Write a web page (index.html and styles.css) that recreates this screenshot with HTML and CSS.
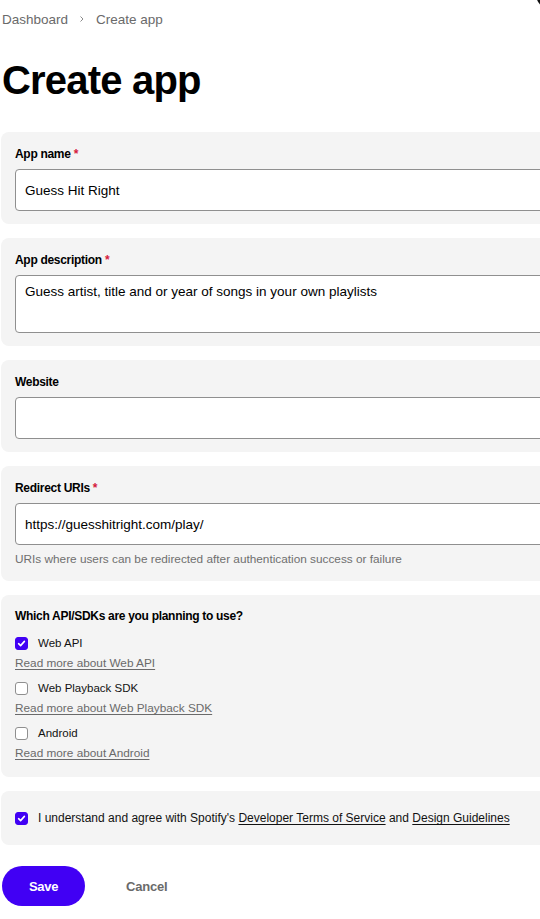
FILE: index.html
```html
<!DOCTYPE html>
<html lang="en">
<head>
<meta charset="utf-8">
<title>Create app</title>
<link rel="stylesheet" href="styles.css">
</head>
<body>
<div class="avatar"></div>
<main class="page">
  <nav class="breadcrumb">
    <span class="crumb">Dashboard</span>
    <svg class="chev" width="8" height="8" viewBox="0 0 8 8"><path d="M2.5 1.5 L5 4 L2.5 6.5" fill="none" stroke="#8a8a8a" stroke-width="1"/></svg>
    <span class="crumb">Create app</span>
  </nav>
  <h1 class="title">Create app</h1>

  <form class="form">
    <section class="card">
      <label class="label">App name <span class="req">*</span></label>
      <input class="field" type="text" value="Guess Hit Right">
    </section>

    <section class="card">
      <label class="label">App description <span class="req">*</span></label>
      <textarea class="field area">Guess artist, title and or year of songs in your own playlists</textarea>
    </section>

    <section class="card">
      <label class="label">Website</label>
      <input class="field" type="text" value="">
    </section>

    <section class="card">
      <label class="label">Redirect URIs <span class="req">*</span></label>
      <input class="field" type="text" value="https://guesshitright.com/play/">
      <p class="help">URIs where users can be redirected after authentication success or failure</p>
    </section>

    <section class="card card-apis">
      <div class="label label-apis">Which API/SDKs are you planning to use?</div>
      <div class="option">
        <div class="check-row">
          <span class="box checked"><svg width="9" height="9" viewBox="0 0 9 9"><path d="M1.6 4.7 L3.6 6.6 L7.4 2.4" fill="none" stroke="#fff" stroke-width="1.6" stroke-linecap="round" stroke-linejoin="round"/></svg></span>
          <span class="check-text">Web API</span>
        </div>
        <a class="more">Read more about Web API</a>
      </div>
      <div class="option">
        <div class="check-row">
          <span class="box"></span>
          <span class="check-text">Web Playback SDK</span>
        </div>
        <a class="more">Read more about Web Playback SDK</a>
      </div>
      <div class="option">
        <div class="check-row">
          <span class="box"></span>
          <span class="check-text">Android</span>
        </div>
        <a class="more">Read more about Android</a>
      </div>
    </section>

    <section class="card card-terms">
      <div class="check-row">
        <span class="box checked"><svg width="9" height="9" viewBox="0 0 9 9"><path d="M1.6 4.7 L3.6 6.6 L7.4 2.4" fill="none" stroke="#fff" stroke-width="1.6" stroke-linecap="round" stroke-linejoin="round"/></svg></span>
        <span class="check-text terms-text">I understand and agree with Spotify's <a class="terms-link">Developer Terms of Service</a> and <a class="terms-link">Design Guidelines</a></span>
      </div>
    </section>

    <div class="actions">
      <button type="button" class="btn-save">Save</button>
      <button type="button" class="btn-cancel">Cancel</button>
    </div>
  </form>
</main>
</body>
</html>
```
FILE: styles.css
```css
html, body {
  margin: 0;
  padding: 0;
  overflow: hidden;
  background: #ffffff;
}
body {
  font-family: "Liberation Sans", Arial, sans-serif;
  color: #000000;
  position: relative;
}
.avatar {
  position: absolute;
  top: -22px;
  left: 536px;
  width: 32px;
  height: 32px;
  border-radius: 50%;
  background: #121212;
}
.page {
  width: 660px;
  padding: 9px 0 0 1px;
}
.breadcrumb {
  display: flex;
  align-items: center;
  height: 20px;
  padding-left: 1px;
  font-size: 13.5px;
  color: #6a6a6a;
}
.chev {
  margin: 0 10px 0 10px;
}
.title {
  margin: 27px 0 28px 1px;
  font-size: 40px;
  line-height: 48px;
  font-weight: 700;
  letter-spacing: -0.8px;
}
.form {
  display: flex;
  flex-direction: column;
  gap: 14px;
}
.card {
  background: #f4f4f4;
  border-radius: 8px;
  padding: 14px 14px 13px;
  display: flex;
  flex-direction: column;
}
.label {
  display: block;
  font-size: 12px;
  line-height: 16px;
  font-weight: 700;
  letter-spacing: -0.3px;
  margin-bottom: 7px;
}
.req {
  color: #d41a3c;
}
.field {
  box-sizing: border-box;
  height: 42px;
  width: 100%;
  margin: 0;
  border: 1px solid #8f8f8f;
  border-radius: 4px;
  background: #ffffff;
  padding: 0 9px;
  font-family: inherit;
  font-size: 13.5px;
  color: #000000;
  outline: none;
}
.area {
  height: 58px;
  padding: 7px 9px 6px;
  line-height: 18px;
  resize: none;
  overflow: hidden;
  display: block;
}
.help {
  margin: 6px 0 1px;
  font-size: 11.8px;
  line-height: 16px;
  color: #6f6f6f;
}
.card-apis {
  padding-top: 13px;
  padding-bottom: 16px;
}
.label-apis {
  margin-bottom: 9px;
}
.option {
  display: flex;
  flex-direction: column;
}
.option + .option {
  margin-top: 7px;
}
.check-row {
  display: flex;
  align-items: center;
  height: 20px;
}
.box {
  box-sizing: border-box;
  width: 13px;
  height: 13px;
  border-radius: 3px;
  border: 1px solid #8f8f8f;
  background: #ffffff;
  margin-right: 10px;
  display: flex;
  align-items: center;
  justify-content: center;
  flex: none;
}
.box.checked {
  background: #4100f4;
  border-color: #4100f4;
}
.check-text {
  font-size: 11.5px;
  line-height: 20px;
  color: #121212;
  white-space: nowrap;
}
.terms-text {
  font-size: 12px;
}
.more {
  margin-top: 2px;
  font-size: 11.8px;
  line-height: 16px;
  color: #6a6a6a;
  text-decoration: underline;
  text-underline-offset: 2px;
  width: max-content;
}
.card-terms {
  padding: 17px 14px;
}
.terms-link {
  color: #121212;
  text-decoration: underline;
  text-underline-offset: 2px;
}
.actions {
  display: flex;
  align-items: center;
  margin-top: 7px;
  padding-left: 1px;
}
.btn-save {
  width: 83px;
  height: 40px;
  border: none;
  border-radius: 20px;
  background: #4100f4;
  color: #ffffff;
  font-family: inherit;
  font-size: 13px;
  font-weight: 700;
  letter-spacing: -0.3px;
  padding: 0;
}
.btn-cancel {
  margin-left: 25px;
  height: 40px;
  border: none;
  background: transparent;
  color: #6a6a6a;
  font-family: inherit;
  font-size: 13px;
  font-weight: 700;
  letter-spacing: -0.2px;
  padding: 0 16px;
}
```
